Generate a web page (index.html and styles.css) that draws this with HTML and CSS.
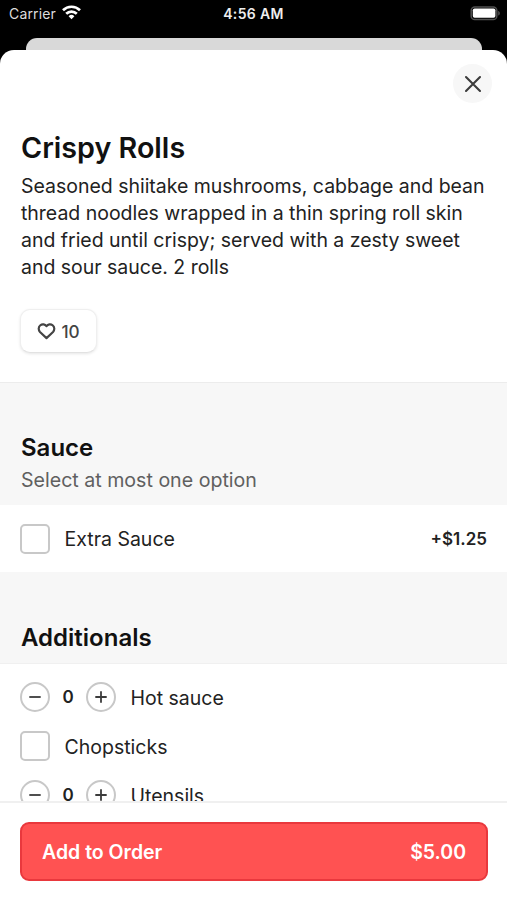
FILE: index.html
```html
<!DOCTYPE html>
<html lang="en">
<head>
<meta charset="utf-8">
<title>Crispy Rolls</title>
<link rel="stylesheet" href="styles.css">
</head>
<body>
<div class="screen">
  <header class="status">
    <div class="carrier"><span class="carrier-name">Carrier</span>
      <svg class="wifi" width="19" height="15" viewBox="0 0 19 15" fill="none" stroke="#fff" stroke-width="2.7"><path d="M1 5.2a12.2 12.2 0 0 1 17 0M4.2 8.7a7.6 7.6 0 0 1 10.6 0"/><path d="M9.5 14.2 6.6 11.2a4.2 4.2 0 0 1 5.8 0z" fill="#fff" stroke="none"/></svg>
    </div>
    <div class="time">4:56 AM</div>
    <svg class="battery" width="31" height="15" viewBox="0 0 31 15"><rect x="1.2" y=".9" width="25.6" height="12.6" rx="3.6" fill="none" stroke="#505050" stroke-width="1.5"/><rect x="2.8" y="2.4" width="22.6" height="9.4" rx="1.8" fill="#fff"/><path d="M28.2 5c2.2.7 2.2 4 0 4.6z" fill="#505050"/></svg>
  </header>
  <div class="peek"></div>
  <main class="sheet">
    <section class="intro">
      <div class="close-row"><button class="close" aria-label="Close"><svg width="18" height="18" viewBox="0 0 18 18" stroke="#3c3c3c" stroke-width="2.1" stroke-linecap="round"><path d="M2 2l14 14M16 2 2 16"/></svg></button></div>
      <h1 class="title">Crispy Rolls</h1>
      <p class="description">Seasoned shiitake mushrooms, cabbage and bean<br>thread noodles wrapped in a thin spring roll skin<br>and fried until crispy; served with a zesty sweet<br>and sour sauce. 2 rolls</p>
      <button class="like"><svg width="19" height="17" viewBox="0 0 20 18" fill="none" stroke="#444" stroke-width="2.3" stroke-linejoin="round"><path d="M10 3.4C8.4 1.2 5.5.8 3.5 2.4 1.2 4.3 1.3 7.5 3.1 9.5L10 16l6.9-6.5c1.8-2 1.9-5.2-.4-7.1-2-1.6-4.9-1.2-6.5 1z"/></svg><span class="likes">10</span></button>
    </section>
    <section class="group-head sauce">
      <h2 class="group-title">Sauce</h2>
      <p class="hint">Select at most one option</p>
    </section>
    <div class="option single"><span class="check"></span><span class="name">Extra Sauce</span><span class="price">+$1.25</span></div>
    <section class="group-head extras"><h2 class="group-title">Additionals</h2></section>
    <div class="options">
      <div class="option"><button class="step" aria-label="Less"><svg width="14" height="14" viewBox="0 0 14 14" stroke="#3c3c3c" stroke-width="1.8"><path d="M1.3 7h11.4"/></svg></button><span class="count">0</span><button class="step" aria-label="More"><svg width="14" height="14" viewBox="0 0 14 14" stroke="#3c3c3c" stroke-width="1.8"><path d="M1.3 7h11.4M7 1.3v11.4"/></svg></button><span class="name">Hot sauce</span></div>
      <div class="option"><span class="check"></span><span class="name">Chopsticks</span></div>
      <div class="option"><button class="step" aria-label="Less"><svg width="14" height="14" viewBox="0 0 14 14" stroke="#3c3c3c" stroke-width="1.8"><path d="M1.3 7h11.4"/></svg></button><span class="count">0</span><button class="step" aria-label="More"><svg width="14" height="14" viewBox="0 0 14 14" stroke="#3c3c3c" stroke-width="1.8"><path d="M1.3 7h11.4M7 1.3v11.4"/></svg></button><span class="name">Utensils</span></div>
    </div>
  </main>
  <footer class="footer"><button class="order"><span class="order-label">Add to Order</span><span class="total">$5.00</span></button></footer>
</div>
</body>
</html>
```
FILE: styles.css
```css
* { box-sizing: border-box; }
body { margin: 0; background: #000; color: #222; font-family: Inter, "Liberation Sans", sans-serif; }
h1, h2, p { margin: 0; }
button { font: inherit; color: inherit; padding: 0; margin: 0; border: 0; }
svg { display: block; flex: none; }
.screen { height: 900px; display: flex; flex-direction: column; overflow: hidden; }
.status { height: 38px; flex: none; display: grid; grid-template-columns: 1fr auto 1fr; padding: 6px 6px 0 9px; color: #fff; font-size: 14px; line-height: 16px; align-items: start; }
.carrier { display: flex; gap: 6px; color: #ddd; }
.carrier-name { letter-spacing: .15px; }
.wifi { margin-top: -1px; }
.time { margin-left: -3px; font-weight: 600; color: #eee; letter-spacing: .35px; }
.battery { justify-self: end; }
.peek { height: 12px; flex: none; margin: 0 25px 0 26px; background: #d9d9d9; border-radius: 11px 11px 0 0; }
.sheet { flex: 1; min-height: 0; overflow: hidden; background: #fff; border-radius: 14px 14px 0 0; }
.intro { height: 332px; padding: 14px 15px 0 21px; }
.close-row { display: flex; justify-content: flex-end; }
.close { width: 39px; height: 39px; border-radius: 50%; background: #f7f7f7; display: grid; place-items: center; }
.title { margin-top: 27px; font-size: 28.7px; line-height: 36px; font-weight: 600; color: #111; }
.description { margin-top: 7px; font-size: 19.5px; line-height: 27px; letter-spacing: -.02px; white-space: nowrap; }
.like { margin: 28px 0 0 -1px; width: 77px; height: 44px; border: 1px solid #efefef; border-bottom-color: #e2e2e2; border-radius: 10px; background: #fff; box-shadow: 0 1px 3px #0000001a; display: flex; align-items: center; justify-content: center; gap: 5px; }
.likes { font-size: 17.2px; font-weight: 500; color: #444; }
.group-head { background: #f7f7f7; padding-left: 21px; }
.sauce { height: 123px; border-top: 1px solid #ececec; padding-top: 50px; }
.extras { height: 92px; padding-top: 51px; border-bottom: 1px solid #f0f0f0; }
.group-title { font-size: 24px; line-height: 30px; font-weight: 600; color: #111; }
.hint { margin-top: 4px; font-size: 19.6px; line-height: 26px; color: #606060; }
.option { height: 49px; display: flex; align-items: center; padding: 0 20px; }
.single { height: 67px; }
.options { padding-top: 8px; }
.check { width: 30px; height: 30px; border: 2px solid #c8c8c8; border-radius: 5px; }
.step { width: 30px; height: 30px; border: 2px solid #c8c8c8; border-radius: 50%; background: #fff; display: grid; place-items: center; }
.count { width: 36px; text-align: center; font-size: 17px; font-weight: 600; }
.name { margin-left: 14.5px; font-size: 19.5px; line-height: 26px; }
.options .name { padding-top: 2px; }
.price { margin-left: auto; font-size: 17px; font-weight: 600; }
.footer { height: 99px; flex: none; background: #fff; border-top: 2px solid #f0f0f0; padding: 19px 19px 0 20px; }
.order { width: 100%; height: 59px; border: 2px solid #e9383d; border-radius: 9px; background: #ff5252; color: #fff; display: flex; justify-content: space-between; align-items: center; padding: 0 20px; font-size: 19.5px; font-weight: 600; }
```
